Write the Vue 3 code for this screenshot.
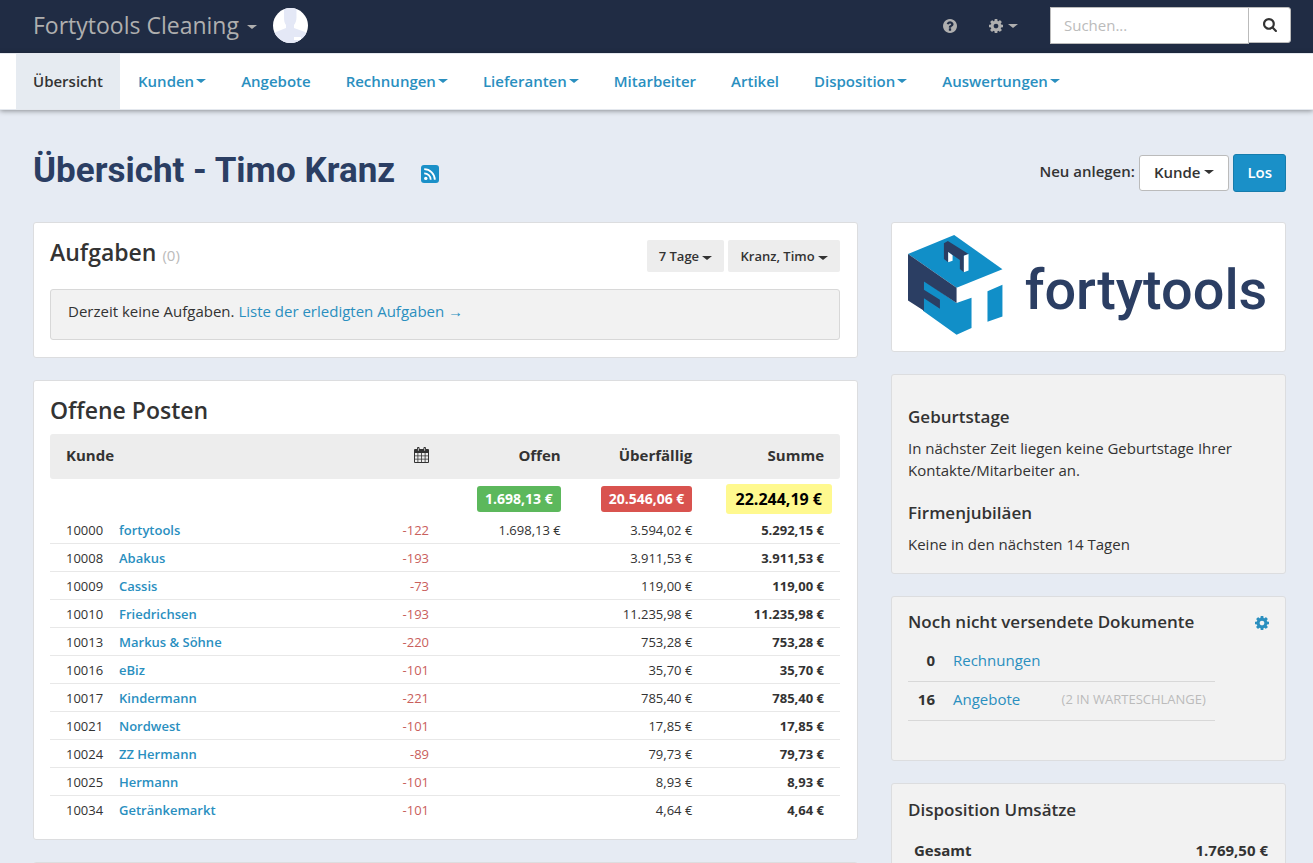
<script setup>
import { ref } from 'vue';

const search = ref('');

const navItems = [
  { label: 'Übersicht', active: true },
  { label: 'Kunden', menu: true },
  { label: 'Angebote' },
  { label: 'Rechnungen', menu: true },
  { label: 'Lieferanten', menu: true },
  { label: 'Mitarbeiter' },
  { label: 'Artikel' },
  { label: 'Disposition', menu: true },
  { label: 'Auswertungen', menu: true }
];

const customers = [
  { id: 10000, name: 'fortytools', days: -122, open: '1.698,13 €', overdue: '3.594,02 €', sum: '5.292,15 €' },
  { id: 10008, name: 'Abakus', days: -193, open: '', overdue: '3.911,53 €', sum: '3.911,53 €' },
  { id: 10009, name: 'Cassis', days: -73, open: '', overdue: '119,00 €', sum: '119,00 €' },
  { id: 10010, name: 'Friedrichsen', days: -193, open: '', overdue: '11.235,98 €', sum: '11.235,98 €' },
  { id: 10013, name: 'Markus & Söhne', days: -220, open: '', overdue: '753,28 €', sum: '753,28 €' },
  { id: 10016, name: 'eBiz', days: -101, open: '', overdue: '35,70 €', sum: '35,70 €' },
  { id: 10017, name: 'Kindermann', days: -221, open: '', overdue: '785,40 €', sum: '785,40 €' },
  { id: 10021, name: 'Nordwest', days: -101, open: '', overdue: '17,85 €', sum: '17,85 €' },
  { id: 10024, name: 'ZZ Hermann', days: -89, open: '', overdue: '79,73 €', sum: '79,73 €' },
  { id: 10025, name: 'Hermann', days: -101, open: '', overdue: '8,93 €', sum: '8,93 €' },
  { id: 10034, name: 'Getränkemarkt', days: -101, open: '', overdue: '4,64 €', sum: '4,64 €' }
];

const documents = [
  { count: 0, label: 'Rechnungen', note: '' },
  { count: 16, label: 'Angebote', note: '(2 in Warteschlange)' }
];

const cogPath = 'M1024 896q0-106-75-181t-181-75-181 75-75 181 75 181 181 75 181-75 75-181zm512-109v222q0 12-8 23t-20 13l-185 28q-19 54-39 91 35 50 107 138 10 12 10 25t-9 23q-27 37-99 108t-94 71q-12 0-26-9l-138-108q-44 23-91 38-16 136-29 186-7 28-36 28h-222q-14 0-24.500-8.500t-11.500-21.500l-28-184q-49-16-90-37l-141 107q-10 9-25 9-14 0-25-11-126-114-165-168-7-10-7-23 0-12 8-23 15-21 51-66.500t54-70.500q-27-50-41-99l-183-27q-13-2-21-12.500t-8-23.500v-222q0-12 8-23t19-13l186-28q14-46 39-92-40-57-107-138-10-12-10-24 0-10 9-23 26-36 98.500-107.500t94.500-71.500q13 0 26 10l138 107q44-23 91-38 16-136 29-186 7-28 36-28h222q14 0 24.500 8.500t11.500 21.500l28 184q49 16 90 37l142-107q9-9 24-9 13 0 25 10 129 119 165 170 7 8 7 22 0 12-8 23-15 21-51 66.500t-54 70.500q26 50 41 98l183 28q13 2 21 12.500t8 23.500z';
</script>

<template>
  <header class="topbar">
    <button type="button" class="brand">Fortytools Cleaning <span class="caret"></span></button>
    <svg class="avatar" viewBox="0 0 35 35" aria-hidden="true">
      <defs>
        <clipPath id="avatar-clip"><circle cx="17.500" cy="17.500" r="17.500" /></clipPath>
      </defs>
      <g clip-path="url(#avatar-clip)">
        <rect width="35" height="35" fill="#fff" />
        <path fill="#e4e8f6" d="M11 0h12.500v9c0 4-1 6-2.500 8v3l11 4 3 3v8H0v-9l3-2 10-4v-3c-1.500-2-2-4-2-8z" />
        <rect x="21" y="29" width="7" height="3" fill="#fff" />
      </g>
    </svg>
    <div class="topbar-tools">
      <button type="button" class="tool" aria-label="Hilfe">
        <svg class="icon" viewBox="0 128 1536 1536" aria-hidden="true">
          <path fill="currentColor" d="M896 1376v-192q0-14-9-23t-23-9h-192q-14 0-23 9t-9 23v192q0 14 9 23t23 9h192q14 0 23-9t9-23zm256-672q0-88-55.500-163t-138.500-116-170-41q-243 0-371 213-15 24 8 42l132 100q7 6 19 6 16 0 25-12 53-68 86-92 34-24 86-24 48 0 85.500 26t37.500 59q0 38-20 61t-68 45q-63 28-115.500 86.500t-52.500 125.500v36q0 14 9 23t23 9h192q14 0 23-9t9-23q0-19 21.500-49.500t54.500-49.500q32-18 49-28.500t46-35 44.500-48 28-60.500 12.500-81zm384 192q0 209-103 385.500t-279.500 279.500-385.500 103-385.500-103-279.500-279.500-103-385.500 103-385.500 279.500-279.500 385.500-103 385.500 103 279.500 279.500 103 385.500z" />
        </svg>
      </button>
      <button type="button" class="tool" aria-label="Einstellungen">
        <svg class="icon" viewBox="0 128 1536 1536" aria-hidden="true"><path fill="currentColor" :d="cogPath" /></svg>
        <span class="caret"></span>
      </button>
      <form class="search" role="search" @submit.prevent>
        <input v-model="search" type="text" placeholder="Suchen..." aria-label="Suchen" />
        <button type="submit" aria-label="Suche starten">
          <svg class="icon" viewBox="0 128 1664 1664" aria-hidden="true">
            <path fill="currentColor" d="M1152 832q0-185-131.500-316.500t-316.500-131.500-316.500 131.500-131.500 316.500 131.500 316.500 316.500 131.500 316.500-131.500 131.500-316.500zm512 832q0 52-38 90t-90 38q-54 0-90-38l-343-342q-179 124-399 124-143 0-273.500-55.500t-225-150-150-225-55.500-273.500 55.500-273.500 150-225 225-150 273.500-55.500 273.500 55.500 225 150 150 225 55.500 273.500q0 220-124 399l343 343q37 37 37 90z" />
          </svg>
        </button>
      </form>
    </div>
  </header>

  <nav class="mainnav">
    <a v-for="item in navItems" :key="item.label" href="#" :class="{ active: item.active }">
      {{ item.label }}<span v-if="item.menu" class="caret"></span>
    </a>
  </nav>

  <main class="page">
    <div class="page-head">
      <h1>Übersicht - Timo Kranz</h1>
      <a href="#" class="rss" aria-label="RSS-Feed">
        <svg viewBox="0 0 18 18" aria-hidden="true">
          <rect width="18" height="18" rx="3" fill="#1a90c8" />
          <circle cx="4.800" cy="13.400" r="1.700" fill="#fff" />
          <path d="M3.200 8.300a6.500 6.500 0 0 1 6.500 6.500M3.200 4.200A10.600 10.600 0 0 1 13.800 14.800" fill="none" stroke="#fff" stroke-width="1.800" />
        </svg>
      </a>
      <div class="create">
        <span>Neu anlegen:</span>
        <button type="button" class="btn">Kunde <span class="caret"></span></button>
        <button type="button" class="btn btn-primary">Los</button>
      </div>
    </div>

    <div class="columns">
      <div class="column">
        <section class="card card-main">
          <div class="card-head">
            <h2>Aufgaben <small>(0)</small></h2>
            <div class="filters">
              <button type="button">7 Tage <span class="caret"></span></button>
              <button type="button">Kranz, Timo <span class="caret"></span></button>
            </div>
          </div>
          <p class="notice">Derzeit keine Aufgaben. <a href="#">Liste der erledigten Aufgaben →</a></p>
        </section>

        <section class="card card-main card-posts">
          <h2>Offene Posten</h2>
          <table class="posts">
            <colgroup>
              <col class="col-id" />
              <col />
              <col class="col-value" />
              <col class="col-value" />
              <col class="col-value" />
              <col class="col-value" />
            </colgroup>
            <thead>
              <tr>
                <th colspan="2" class="left">Kunde</th>
                <th aria-label="Tage">
                  <svg class="calendar" viewBox="0 0 15 16" aria-hidden="true">
                    <path fill="currentColor" d="M1 2h2V1.200a1.200 1.200 0 0 1 2.600 0V2h3.800V1.200a1.200 1.200 0 0 1 2.600 0V2h2a1 1 0 0 1 1 1v12a1 1 0 0 1-1 1H1a1 1 0 0 1-1-1V3a1 1 0 0 1 1-1z" />
                    <path fill="#ededed" d="M1 6h2.500v2.500H1zM4.300 6h2.800v2.500H4.300zM7.900 6h2.800v2.500H7.900zM11.500 6H14v2.500h-2.500zM1 9.300h2.500v2.500H1zM4.300 9.300h2.800v2.500H4.300zM7.900 9.300h2.800v2.500H7.900zM11.500 9.300H14v2.500h-2.500zM1 12.600h2.500V15H1zM4.300 12.600h2.800V15H4.300zM7.900 12.600h2.800V15H7.900zM11.500 12.600H14V15h-2.500zM3.900 1.200h.8v2.500h-.8zM10.300 1.200h.8v2.500h-.8z" />
                  </svg>
                </th>
                <th>Offen</th>
                <th>Überfällig</th>
                <th>Summe</th>
              </tr>
            </thead>
            <tbody>
              <tr class="totals">
                <td colspan="3"></td>
                <td><span class="badge badge-open">1.698,13 €</span></td>
                <td><span class="badge badge-overdue">20.546,06 €</span></td>
                <td class="total"><span class="badge badge-sum">22.244,19 €</span></td>
              </tr>
              <tr v-for="customer in customers" :key="customer.id">
                <td class="left">{{ customer.id }}</td>
                <td class="name"><a href="#">{{ customer.name }}</a></td>
                <td class="days">{{ customer.days }}</td>
                <td>{{ customer.open }}</td>
                <td>{{ customer.overdue }}</td>
                <td class="sum">{{ customer.sum }}</td>
              </tr>
            </tbody>
          </table>
        </section>

        <section class="card card-main"></section>
      </div>

      <aside class="column">
        <section class="card card-logo">
          <svg viewBox="0 0 362 101" role="img" aria-label="fortytools">
            <path fill="#118fc8" d="M46.300 0 94.700 34.300 48.700 53 0 19z" />
            <path fill="#118fc8" d="M15 45 48.700 68.300 63.700 63v30.300L48.700 100 15 76zM79.700 56.300 94.700 50v31.700l-15 5.300z" />
            <path fill="#2b3e63" d="M0 19 48.700 53v15.300L16 46.700V55l16 10v9L16 63.500V76L0 65.700z" />
            <path fill="#2b3e63" d="M36 8.300 40 6l20.700 13-4.700 1.700v16.600L52 34v-9l-11.700-8v10.300L36 24z" />
            <path fill="#fff" d="M40.300 17l4.400 3.300v5.400l-4.400 1.600zM56 20.700l4.700-1.700v16.700L56 37.300z" />
            <text x="117" y="74" class="wordmark">fortytools</text>
          </svg>
        </section>

        <section class="card card-muted card-events">
          <h3>Geburtstage</h3>
          <p>In nächster Zeit liegen keine Geburtstage Ihrer Kontakte/Mitarbeiter an.</p>
          <h3>Firmenjubiläen</h3>
          <p>Keine in den nächsten 14 Tagen</p>
        </section>

        <section class="card card-muted card-documents">
          <div class="card-head">
            <h3>Noch nicht versendete Dokumente</h3>
            <a href="#" class="settings" aria-label="Einstellungen">
              <svg class="icon" viewBox="0 128 1536 1536" aria-hidden="true"><path fill="currentColor" :d="cogPath" /></svg>
            </a>
          </div>
          <ul>
            <li v-for="doc in documents" :key="doc.label">
              <strong>{{ doc.count }}</strong>
              <a href="#">{{ doc.label }}</a>
              <small v-if="doc.note">{{ doc.note }}</small>
            </li>
          </ul>
        </section>

        <section class="card card-muted card-revenue">
          <h3>Disposition Umsätze</h3>
          <div class="revenue">
            <strong>Gesamt</strong>
            <strong>1.769,50 €</strong>
          </div>
        </section>
      </aside>
    </div>
  </main>
</template>

<style>
body {
  margin: 0;
  background: #e6ebf3;
}

#app {
  font-family: "Open Sans", "Noto Sans", sans-serif;
  font-size: 15px;
  line-height: 22px;
  color: #333;
}
</style>

<style scoped>
* {
  box-sizing: border-box;
}

a {
  color: #2a8fbf;
  text-decoration: none;
}

h1,
h2,
h3,
p {
  margin: 0;
}

button,
input {
  font: inherit;
  color: inherit;
  cursor: pointer;
}

.caret {
  display: inline-block;
  border-top: 4px solid;
  border-left: 5px solid transparent;
  border-right: 5px solid transparent;
  vertical-align: middle;
}

.icon {
  width: 14px;
  height: 14px;
  display: block;
}

.topbar {
  display: flex;
  align-items: center;
  min-height: 53px;
  padding: 0 22px 2px 33px;
  background: #202c44;
}

.brand {
  padding: 0 0 2px;
  border: 0;
  background: none;
  color: #afafaf;
  font-size: 23px;
  line-height: 32px;
}

.brand .caret {
  margin-left: 2px;
}

.avatar {
  width: 35px;
  height: 35px;
  margin-left: 16px;
}

.topbar-tools {
  display: flex;
  align-items: center;
  margin-left: auto;
}

.tool {
  display: flex;
  align-items: center;
  gap: 5px;
  padding: 0;
  margin-right: 32px;
  border: 0;
  background: none;
  color: #afafaf;
}

.search {
  display: flex;
}

.search input {
  width: 199px;
  height: 37px;
  padding: 0 13px 2px;
  border: 1px solid #bbb;
  border-radius: 0;
  background: #fff;
  outline: none;
}

.search input::placeholder {
  color: #bbb;
  opacity: 1;
}

.search button {
  display: flex;
  align-items: center;
  justify-content: center;
  width: 43px;
  height: 36px;
  margin-left: -1px;
  padding: 0;
  border: 1px solid #bbb;
  border-radius: 0 3px 3px 0;
  background: #fff;
}

.mainnav {
  display: flex;
  gap: 1px;
  height: 57px;
  padding: 0 16px;
  background: #fff;
  border-top: 1px solid #e4e8ee;
  border-bottom: 1px solid #e4e8ee;
  box-shadow: 0 1px 5px rgba(0, 0, 0, 0.4);
}

.mainnav a {
  display: flex;
  align-items: center;
  gap: 2px;
  padding: 0 17px 2px;
  font-weight: 600;
}

.mainnav a.active {
  background: #e6ebf1;
  color: #333;
}

.page {
  padding: 0 27px 22px 33px;
}

.page-head {
  display: flex;
  align-items: center;
  padding: 38px 0 24px;
  min-height: 112px;
}

h1 {
  padding-bottom: 4px;
  font-family: Roboto, "Open Sans", sans-serif;
  font-size: 35px;
  font-weight: 700;
  line-height: 44px;
  color: #2b3e63;
}

.rss {
  margin-left: 26px;
  padding-top: 2px;
}

.rss svg {
  display: block;
  width: 18px;
  height: 18px;
}

.create {
  display: flex;
  align-items: center;
  gap: 4px;
  margin-left: auto;
  font-weight: 600;
}

.create span:first-child {
  padding-bottom: 4px;
}

.btn {
  height: 36px;
  padding: 0 14px 2px;
  border: 1px solid #bbb;
  border-radius: 3px;
  background: #fff;
  font-weight: 600;
}

.btn-primary {
  height: 38px;
  padding: 0 13px 2px;
  border-color: #167cac;
  background: #1a90c8;
  color: #fff;
}

.columns {
  display: grid;
  grid-template-columns: minmax(0, 165fr) minmax(0, 79fr);
  gap: 33px;
}

.column {
  display: flex;
  flex-direction: column;
  gap: 22px;
}

.card {
  padding: 17px 16px;
  border: 1px solid #dcdddf;
  border-radius: 3px;
  background: #fff;
}

.card-main {
  padding-right: 17px;
}

.card-muted {
  background: #f2f2f2;
}

.card-head {
  display: flex;
  align-items: flex-start;
  justify-content: space-between;
}

h2 {
  font-size: 23px;
  font-weight: 600;
  line-height: 24px;
}

h2 small {
  font-size: 15px;
  font-weight: 400;
  color: #bbb;
}

.filters {
  display: flex;
  gap: 4px;
}

.filters button {
  height: 32px;
  padding: 0 12px;
  border: 0;
  border-radius: 2px;
  background: #ededed;
  font-size: 13px;
  font-weight: 600;
}

.notice {
  margin-top: 17px;
  padding: 10px 17px 17px;
  border: 1px solid #d8d8d8;
  border-radius: 3px;
  background: #f2f2f2;
}

.card-posts {
  padding-bottom: 15px;
}

.posts {
  width: 100%;
  margin-top: 12px;
  table-layout: fixed;
  border-collapse: separate;
  border-spacing: 0;
  font-size: 13px;
}

.col-id {
  width: 69px;
}

.col-value {
  width: calc(100% / 6);
}

.posts th {
  height: 45px;
  padding: 0 16px 3px;
  background: #ededed;
  font-size: 15px;
  font-weight: 700;
  text-align: right;
}

.posts th:first-child {
  border-radius: 3px 0 0 3px;
}

.posts th:last-child {
  border-radius: 0 3px 3px 0;
}

.posts td {
  height: 28px;
  padding: 0 16px;
  border-bottom: 1px solid #e8e8e8;
  line-height: 18px;
  text-align: right;
}

.posts tr:last-child td {
  border-bottom: 0;
}

.posts th.left,
.posts td.left {
  text-align: left;
}

.posts td.left {
  padding-right: 0;
}

.posts td.name {
  padding-left: 0;
  text-align: left;
  font-weight: 600;
}

.posts .days {
  color: #c9605c;
}

.posts .sum {
  font-weight: 700;
}

.posts .totals td {
  height: 37px;
  padding-top: 3px;
  border-bottom: 0;
  white-space: nowrap;
}

.posts .totals .total {
  padding-right: 8px;
}

.calendar {
  width: 15px;
  height: 16px;
  vertical-align: -2px;
}

.badge {
  display: inline-block;
  padding: 0 8px;
  border-radius: 3px;
  font-size: 14px;
  line-height: 26px;
  font-weight: 700;
  color: #fff;
  vertical-align: middle;
}

.badge-open {
  background: #5cb85c;
}

.badge-overdue {
  background: #d9534f;
}

.badge-sum {
  padding: 0 10px;
  background: #fff98f;
  color: #000;
  font-size: 16px;
  line-height: 30px;
}

h3 {
  font-size: 17px;
  font-weight: 600;
  line-height: 22px;
}

.card-logo {
  padding: 12px 16px 15px;
}

.card-logo svg {
  display: block;
  width: 100%;
}

.wordmark {
  font-family: Roboto, sans-serif;
  font-size: 56px;
  font-weight: 500;
  fill: #2b3e63;
}

.card-events {
  padding-top: 10px;
  padding-bottom: 18px;
}

.card-events h3 {
  margin: 21px 0 9px;
}

.card-documents {
  padding: 14px 16px 39px;
}

.settings {
  padding-top: 5px;
}

.card-documents ul {
  width: 85%;
  margin: 10px 0 0;
  padding: 0;
  list-style: none;
}

.card-documents li {
  display: flex;
  align-items: center;
  padding: 6px 9px 10px 0;
  border-bottom: 1px solid #d8d8d8;
}

.card-documents strong {
  width: 27px;
  margin-right: 18px;
  text-align: right;
}

.card-documents small {
  margin-left: auto;
  font-size: 13px;
  text-transform: uppercase;
  color: #bbb;
}

.card-revenue {
  padding-top: 15px;
}

.revenue {
  display: flex;
  justify-content: space-between;
  margin-top: 18px;
  padding: 0 1px 0 6px;
}
</style>
